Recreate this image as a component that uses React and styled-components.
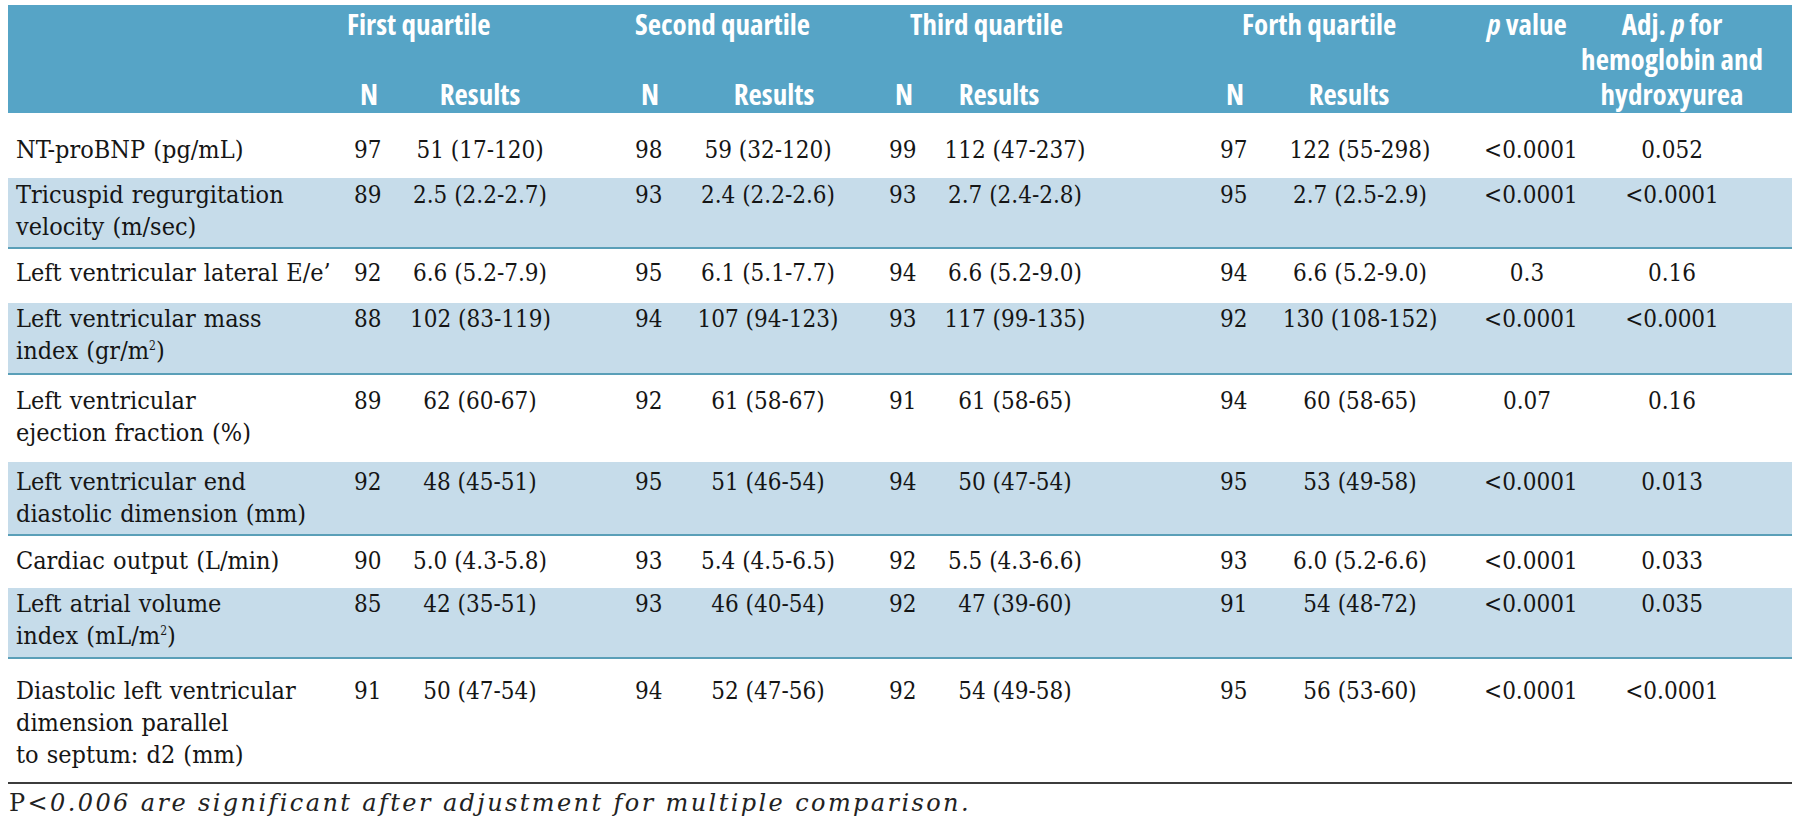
import React from "react";
import styled, { createGlobalStyle } from "styled-components";

const GlobalStyle = createGlobalStyle`
    html, body { background:#fff; }
    body { margin:5px 8px 0 8px; }
`;

const cols = [
    { w: 322, align: "left", pl: 8 },
    { w: 80, align: "left", pl: 24 },
    { w: 140, align: "center" },
    { w: 140, align: "left", pl: 85 },
    { w: 156, align: "center" },
    { w: 84, align: "left", pl: 43 },
    { w: 170, align: "center" },
    { w: 180, align: "left", pl: 120 },
    { w: 160, align: "center" },
    { w: 130, align: "center", pl: 44 },
    { w: 222, align: "center", pr: 18 },
];

// shift = nudge of the "Results" heading from the column centre
const groups = [
    { label: "First quartile", pl: 17, shift: 0 },
    { label: "Second quartile", pl: 85, shift: 6 },
    { label: "Third quartile", pl: 64, shift: -16 },
    { label: "Forth quartile", pl: 142, shift: -11 },
];

const rows = [
    { label: ["NT-proBNP (pg/mL)"], h: 65, pt: 21, vals: ["97", "51 (17-120)", "98", "59 (32-120)", "99", "112 (47-237)", "97", "122 (55-298)", "<0.0001", "0.052"] },
    { label: ["Tricuspid regurgitation", "velocity (m/sec)"], h: 70, pt: 1, shade: true, vals: ["89", "2.5 (2.2-2.7)", "93", "2.4 (2.2-2.6)", "93", "2.7 (2.4-2.8)", "95", "2.7 (2.5-2.9)", "<0.0001", "<0.0001"] },
    { label: ["Left ventricular lateral E/e’"], h: 55, pt: 8, vals: ["92", "6.6 (5.2-7.9)", "95", "6.1 (5.1-7.7)", "94", "6.6 (5.2-9.0)", "94", "6.6 (5.2-9.0)", "0.3", "0.16"] },
    { label: ["Left ventricular mass", <>index (gr/m<sup>2</sup>)</>], h: 71, pt: 0, shade: true, vals: ["88", "102 (83-119)", "94", "107 (94-123)", "93", "117 (99-135)", "92", "130 (108-152)", "<0.0001", "<0.0001"] },
    { label: ["Left ventricular", "ejection fraction (%)"], h: 88, pt: 10, vals: ["89", "62 (60-67)", "92", "61 (58-67)", "91", "61 (58-65)", "94", "60 (58-65)", "0.07", "0.16"] },
    { label: ["Left ventricular end", "diastolic dimension (mm)"], h: 73, pt: 4, shade: true, vals: ["92", "48 (45-51)", "95", "51 (46-54)", "94", "50 (47-54)", "95", "53 (49-58)", "<0.0001", "0.013"] },
    { label: ["Cardiac output (L/min)"], h: 53, pt: 9, vals: ["90", "5.0 (4.3-5.8)", "93", "5.4 (4.5-6.5)", "92", "5.5 (4.3-6.6)", "93", "6.0 (5.2-6.6)", "<0.0001", "0.033"] },
    { label: ["Left atrial volume", <>index (mL/m<sup>2</sup>)</>], h: 70, pt: 0, shade: true, vals: ["85", "42 (35-51)", "93", "46 (40-54)", "92", "47 (39-60)", "91", "54 (48-72)", "<0.0001", "0.035"] },
    { label: ["Diastolic left ventricular", "dimension parallel", "to septum: d2 (mm)"], h: 125, pt: 16, last: true, vals: ["91", "50 (47-54)", "94", "52 (47-56)", "92", "54 (49-58)", "95", "56 (53-60)", "<0.0001", "<0.0001"] },
];

const Page = styled.div`
    width:1784px;
`;

const Table = styled.table`
    width:1784px;
    table-layout:fixed;
    border-collapse:collapse;
    border-spacing:0;
`;

const Head = styled.thead`
    background:#56a4c6;
`;

const HeadRow = styled.tr`
    height:${p => p.$h}px;
`;

const HeadCell = styled.th`
    padding:0;
    padding-left:${p => p.$pl || 0}px;
    padding-right:${p => p.$pr || 0}px;
    padding-top:${p => p.$bottom ? 0 : 1}px;
    padding-bottom:${p => p.$bottom ? 2 : 0}px;
    vertical-align:${p => p.$bottom ? "bottom" : "top"};
    text-align:${p => p.$align || "center"};
    font-family:"Open Sans", "Noto Sans", "DejaVu Sans Condensed", sans-serif;
    font-stretch:75%;
    font-weight:700;
    font-size:29px;
    line-height:35px;
    color:#fff;
    white-space:nowrap;
`;

const Ital = styled.i`
    display:inline-block;
    font-style:italic;
    line-height:35px;
    height:35px;
    vertical-align:top;
`;

const BodyRow = styled.tr`
    height:${p => p.$h}px;
    background:${p => p.$shade ? "#c6dcea" : "#fff"};
`;

const Cell = styled.td`
    padding:0;
    padding-top:${p => p.$pt}px;
    padding-left:${p => p.$pl || 0}px;
    padding-right:${p => p.$pr || 0}px;
    vertical-align:top;
    text-align:${p => p.$align};
    font-family:"DejaVu Serif Condensed", "DejaVu Serif", "Liberation Serif", serif;
    font-stretch:condensed;
    font-size:24px;
    line-height:32px;
    color:#151515;
    white-space:nowrap;
    border-bottom:${p => p.$last ? "2px solid #3c3c3c" : p.$shade ? "2px solid #5a9fb8" : "0"};
    sup { font-size:12px; line-height:0; vertical-align:9px; }
`;

const Label = styled(Cell)`
    font-size:25px;
    word-spacing:1px;
`;

const Note = styled.p`
    margin:6px 0 0 1px;
    font-family:"DejaVu Serif", "Liberation Serif", serif;
    font-size:24px;
    line-height:26px;
    letter-spacing:2.4px;
    color:#222;
    em { font-style:italic; }
`;

const App = () => {
    return (
        <Page>
            <GlobalStyle />
            <Table>
                <colgroup>
                    {cols.map((c, i) => <col key={i} style={{ width: c.w }} />)}
                </colgroup>
                <Head>
                    <HeadRow $h={70}>
                        <HeadCell rowSpan={2} />
                        {groups.map(g => (
                            <HeadCell key={g.label} colSpan={2} $align="left" $pl={g.pl}>{g.label}</HeadCell>
                        ))}
                        <HeadCell rowSpan={2} $pl={44}><Ital>p</Ital> value</HeadCell>
                        <HeadCell rowSpan={2} $pr={18}>Adj. <Ital>p</Ital> for<br />hemoglobin and<br />hydroxyurea</HeadCell>
                    </HeadRow>
                    <HeadRow $h={38}>
                        {groups.map((g, i) => (
                            <React.Fragment key={g.label}>
                                <HeadCell $bottom $align="left" $pl={cols[1 + i * 2].pl + 6}>N</HeadCell>
                                <HeadCell $bottom $pl={g.shift > 0 ? g.shift * 2 : 0} $pr={g.shift < 0 ? -g.shift * 2 : 0}>Results</HeadCell>
                            </React.Fragment>
                        ))}
                    </HeadRow>
                </Head>
                <tbody>
                    {rows.map((r, ri) => (
                        <BodyRow key={ri} $h={r.h} $shade={r.shade}>
                            <Label $pt={r.pt} $align="left" $pl={8} $shade={r.shade} $last={r.last}>
                                {r.label.map((l, li) => (
                                    <React.Fragment key={li}>{li > 0 && <br />}{l}</React.Fragment>
                                ))}
                            </Label>
                            {r.vals.map((v, vi) => {
                                const c = cols[vi + 1];
                                return (
                                    <Cell key={vi} $pt={r.pt} $align={c.align} $pl={c.pl} $pr={c.pr} $shade={r.shade} $last={r.last}>{v}</Cell>
                                );
                            })}
                        </BodyRow>
                    ))}
                </tbody>
            </Table>
            <Note>P&lt;<em>0.006 are significant after adjustment for multiple comparison.</em></Note>
        </Page>
    );
};

export default App;
